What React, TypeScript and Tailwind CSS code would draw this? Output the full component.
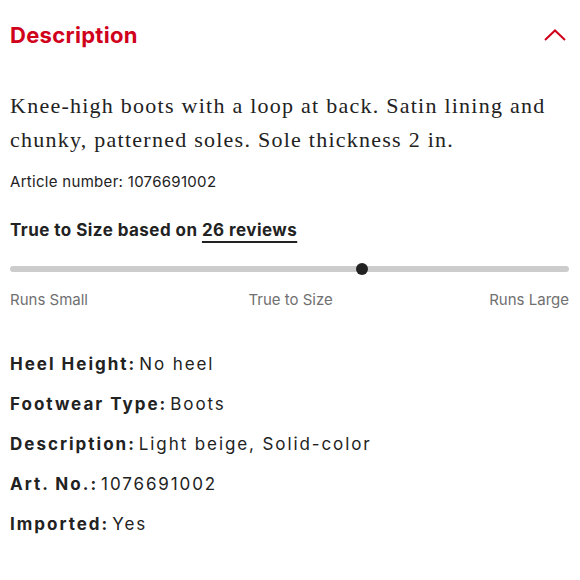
export default function App() {
  const specs: [string, string][] = [
    ['Heel Height:', 'No heel'],
    ['Footwear Type:', 'Boots'],
    ['Description:', 'Light beige, Solid-color'],
    ['Art. No.:', '1076691002'],
    ['Imported:', 'Yes'],
  ]

  return (
    <div className="w-[580px] h-[580px] bg-white pl-[10px] pr-[11px] font-['Inter','Noto_Sans',sans-serif] text-[#222]">
      {/* Accordion header */}
      <div className="flex items-center justify-between h-[70px]">
        <h2 className="text-[22px] font-bold text-[#d0021b] tracking-[0.3px]">Description</h2>
        <svg width="22" height="12" viewBox="0 0 22 12" className="mr-[3px]">
          <path d="M1 11 L11 1.5 L21 11" fill="none" stroke="#d0021b" strokeWidth="2" />
        </svg>
      </div>

      <p className="mt-[19px] font-['Liberation_Serif',serif] text-[22px] leading-[34px] tracking-[1.25px] text-[#222]">
        Knee-high boots with a loop at back. Satin lining and chunky, patterned soles. Sole thickness 2 in.
      </p>

      <div className="mt-[14px] text-[15px] tracking-[0.3px] text-[#222]">Article number: 1076691002</div>

      {/* Fit */}
      <div className="mt-[24px] text-[17px] font-bold tracking-[0.45px]">
        True to Size based on{' '}
        <span className="underline underline-offset-[5px] decoration-[1.5px]">26 reviews</span>
      </div>

      <div className="relative mt-[20px] h-[12px] flex items-center">
        <div className="w-full h-[6px] rounded-full bg-[#cccccc]" />
        <div className="absolute left-[346px] top-0 w-[12px] h-[12px] rounded-full bg-[#222]" />
      </div>

      <div className="mt-[14px] flex justify-between text-[15px] text-[#707070]">
        <span>Runs Small</span>
        <span className="ml-[4px]">True to Size</span>
        <span>Runs Large</span>
      </div>

      {/* Specs */}
      <div className="mt-[40px] flex flex-col gap-[16px]">
        {specs.map(([k, v]) => (
          <div key={k} className="text-[17px] leading-[24px]">
            <span className="font-bold tracking-[2px]">{k}</span>
            <span className="ml-[3px] tracking-[1.9px]">{v}</span>
          </div>
        ))}
      </div>
    </div>
  )
}
